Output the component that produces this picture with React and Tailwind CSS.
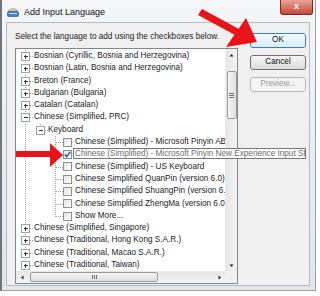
import React from "react"

const rows = [
  { t: "Bosnian (Cyrillic, Bosnia and Herzegovina)", l: 0, k: "plus" },
  { t: "Bosnian (Latin, Bosnia and Herzegovina)", l: 0, k: "plus" },
  { t: "Breton (France)", l: 0, k: "plus" },
  { t: "Bulgarian (Bulgaria)", l: 0, k: "plus" },
  { t: "Catalan (Catalan)", l: 0, k: "plus" },
  { t: "Chinese (Simplified, PRC)", l: 0, k: "minus" },
  { t: "Keyboard", l: 1, k: "minus" },
  { t: "Chinese (Simplified) - Microsoft Pinyin ABC Input Style", l: 2, k: "box" },
  { t: "Chinese (Simplified) - Microsoft Pinyin New Experience Input Style", l: 2, k: "checked" },
  { t: "Chinese (Simplified) - US Keyboard", l: 2, k: "box" },
  { t: "Chinese Simplified QuanPin (version 6.0)", l: 2, k: "box" },
  { t: "Chinese Simplified ShuangPin (version 6.0)", l: 2, k: "box" },
  { t: "Chinese Simplified ZhengMa (version 6.0)", l: 2, k: "box" },
  { t: "Show More...", l: 2, k: "box", last: true },
  { t: "Chinese (Simplified, Singapore)", l: 0, k: "plus" },
  { t: "Chinese (Traditional, Hong Kong S.A.R.)", l: 0, k: "plus" },
  { t: "Chinese (Traditional, Macao S.A.R.)", l: 0, k: "plus" },
  { t: "Chinese (Traditional, Taiwan)", l: 0, k: "plus" },
]

const H = 12.3
const M = 6.5
const dot = { stroke: "#a3a3a3", strokeDasharray: "1 1", strokeWidth: 1 }

// expander box (+ / -) centred on a column
const Expander = ({ c, minus }) => (
  <g>
    <rect x={c - 4} y={M - 4} width="8" height="8" fill="#fff" stroke="#9aa3ab" />
    <line x1={c - 2} y1={M} x2={c + 2} y2={M} stroke="#333" />
    {!minus && <line x1={c} y1={M - 2} x2={c} y2={M + 2} stroke="#333" />}
  </g>
)

const Gutter = ({ l, k, last }) => {
  const w = l === 0 ? 18 : l === 1 ? 32 : 47
  return (
    <svg width={w} height={H} className="shrink-0" shapeRendering="crispEdges">
      <line x1="9.5" y1="0" x2="9.5" y2={H} {...dot} />
      {l === 0 && (
        <>
          <line x1="14" y1={M} x2="18" y2={M} {...dot} />
          <Expander c={9.5} minus={k === "minus"} />
        </>
      )}
      {l === 1 && (
        <>
          <line x1="24.5" y1="0" x2="24.5" y2={M} {...dot} />
          <line x1="29" y1={M} x2="32" y2={M} {...dot} />
          <Expander c={24.5} minus />
        </>
      )}
      {l === 2 && (
        <>
          <line x1="39.5" y1="0" x2="39.5" y2={last ? M : H} {...dot} />
          <line x1="40" y1={M} x2="47" y2={M} {...dot} />
        </>
      )}
    </svg>
  )
}

const Check = ({ checked }) => (
  <span className="shrink-0 w-[9px] h-[9px] border border-[#8e8f8f] bg-gradient-to-br from-[#e6e6e6] to-[#fbfbfb] flex items-center justify-center">
    {checked && (
      <svg width="7" height="7" viewBox="0 0 7 7">
        <path d="M0.8 3.6 L2.7 5.6 L6.3 0.9" fill="none" stroke="#2a4f9c" strokeWidth="1.4" />
      </svg>
    )}
  </span>
)

const Row = ({ r }) => (
  <div className="h-[12.3px] flex items-center whitespace-nowrap">
    <Gutter l={r.l} k={r.k} last={r.last} />
    {r.l === 2 && <Check checked={r.k === "checked"} />}
    <span className={r.l === 2 ? "ml-[3px]" : ""}>{r.t}</span>
  </div>
)

const Arrow = ({ dir }) => (
  <svg width="5" height="5" viewBox="0 0 5 5">
    {dir === "up" && <path d="M0.5 3.5 L2.5 1 L4.5 3.5 Z" fill="#222" />}
    {dir === "down" && <path d="M0.5 1.5 L2.5 4 L4.5 1.5 Z" fill="#222" />}
    {dir === "left" && <path d="M3.5 0.5 L1 2.5 L3.5 4.5 Z" fill="#222" />}
    {dir === "right" && <path d="M1.5 0.5 L4 2.5 L1.5 4.5 Z" fill="#222" />}
  </svg>
)

const Button = ({ children, focus, disabled }) => (
  <div
    className={
      "h-[15px] w-[56px] rounded-[3px] border flex items-center justify-center " +
      (focus
        ? "border-[#3c7fb1] bg-gradient-to-b from-[#f4fbfe] to-[#d7eefb] text-[#111]"
        : disabled
          ? "border-[#b5b9bc] bg-[#f4f4f4] text-[#9a9a9a]"
          : "border-[#707070] bg-gradient-to-b from-[#f6f6f6] to-[#dcdcdc] text-[#111]")
    }
  >
    {children}
  </div>
)

export default function App() {
  return (
    <div className="relative w-[320px] h-[296px] bg-white overflow-hidden font-['Liberation_Sans',Arial,sans-serif] text-[8.2px] text-[#1b1b1b]">
      {/* window frame */}
      <div className="flex flex-col w-[316px] h-[291px] bg-gradient-to-b from-[#f4f6f8] to-[#e2e6ea] border-l-[2px] border-r border-b border-l-[#70757a] border-r-[#9aa0a6] border-b-[#9aa0a6]">
        {/* title bar */}
        <div className="h-[22px] flex items-start shrink-0">
          <svg width="12" height="12" viewBox="0 0 12 12" className="mt-[6px] ml-[5px]">
            <path d="M1 5 Q6 0 11 5 Z" fill="#e8d9a8" stroke="#9a8a5a" strokeWidth="0.6" />
            <rect x="0.5" y="5.5" width="11" height="5" rx="1" fill="#3e7fc8" stroke="#27538a" strokeWidth="0.6" />
            <rect x="2" y="7" width="8" height="1" fill="#cfe3f7" />
          </svg>
          <span className="ml-[5px] mt-[6px] text-[9px] text-[#111]">Add Input Language</span>
          <div className="flex-1" />
          <div className="mr-[2px] w-[33px] h-[15px] rounded-b-[3px] border border-t-0 border-[#7a2a22] bg-gradient-to-b from-[#e7a496] to-[#c5463a] flex items-center justify-center text-white text-[9px] font-bold">
            x
          </div>
        </div>
        {/* body */}
        <div className="flex-1 ml-[4px] mr-[5px] mb-[4px] bg-[#f0f0f0] border border-[#b4bac0] flex">
          <div className="pl-[8px] pt-[8px] flex flex-col">
            <div className="h-[12px] leading-[12px] whitespace-nowrap">
              Select the language to add using the checkboxes below.
            </div>
            <div className="mt-[5px] w-[223px] h-[236px] border border-[#828790] bg-white flex flex-col">
              <div className="flex flex-1 min-h-0">
                <div className="w-[209px] overflow-hidden pt-[1px]">
                  {rows.map((r, i) => (
                    <Row key={i} r={r} />
                  ))}
                </div>
                {/* vertical scrollbar */}
                <div className="w-[12px] bg-gradient-to-r from-[#e6e6e6] to-[#f4f4f4] border-l border-[#ececec] flex flex-col items-center">
                  <div className="h-[12px] flex items-center justify-center">
                    <Arrow dir="up" />
                  </div>
                  <div className="mt-[10px] w-[10px] h-[48px] rounded-[2px] border border-[#9b9b9b] bg-gradient-to-r from-[#f6f6f6] to-[#dedede] flex flex-col items-center justify-center gap-[1px]">
                    <div className="w-[5px] h-px bg-[#6f6f6f]" />
                    <div className="w-[5px] h-px bg-[#6f6f6f]" />
                    <div className="w-[5px] h-px bg-[#6f6f6f]" />
                  </div>
                  <div className="flex-1" />
                  <div className="h-[12px] flex items-center justify-center">
                    <Arrow dir="down" />
                  </div>
                </div>
              </div>
              {/* horizontal scrollbar */}
              <div className="h-[12px] flex shrink-0">
                <div className="w-[209px] bg-gradient-to-b from-[#e6e6e6] to-[#f4f4f4] flex items-center">
                  <div className="w-[12px] flex items-center justify-center">
                    <Arrow dir="left" />
                  </div>
                  <div className="ml-[2px] w-[128px] h-[10px] rounded-[2px] border border-[#9b9b9b] bg-gradient-to-b from-[#f6f6f6] to-[#dedede] flex items-center justify-center gap-[1px]">
                    <div className="w-px h-[4px] bg-[#6f6f6f]" />
                    <div className="w-px h-[4px] bg-[#6f6f6f]" />
                    <div className="w-px h-[4px] bg-[#6f6f6f]" />
                  </div>
                  <div className="flex-1" />
                  <div className="w-[12px] flex items-center justify-center">
                    <Arrow dir="right" />
                  </div>
                </div>
                <div className="w-[12px] bg-[#f0f0f0]" />
              </div>
            </div>
          </div>
          <div className="ml-auto mr-[3px] pt-[10px] flex flex-col gap-[7px]">
            <Button focus>OK</Button>
            <Button>Cancel</Button>
            <Button disabled>Preview...</Button>
          </div>
        </div>
      </div>

      {/* in-place tooltip over the truncated item */}
      <div className="absolute left-[73px] top-[148px] w-[233px] h-[11px] border border-[#767676] bg-white text-[#6a6a6a] whitespace-nowrap overflow-hidden leading-[9px] pl-[1px]">
        Chinese (Simplified) - Microsoft Pinyin New Experience Input Style
      </div>

      {/* red annotation arrows */}
      <svg className="absolute inset-0 pointer-events-none" width="320" height="296">
        <polygon points="198,15 202,9 239,29 235,35" fill="#e8141b" />
        <polygon points="246,18 257,42 226,47" fill="#e8141b" />
        <rect x="16" y="151" width="36" height="6" fill="#e8141b" />
        <polygon points="50,143 63,155 50,167" fill="#e8141b" />
      </svg>
    </div>
  )
}
